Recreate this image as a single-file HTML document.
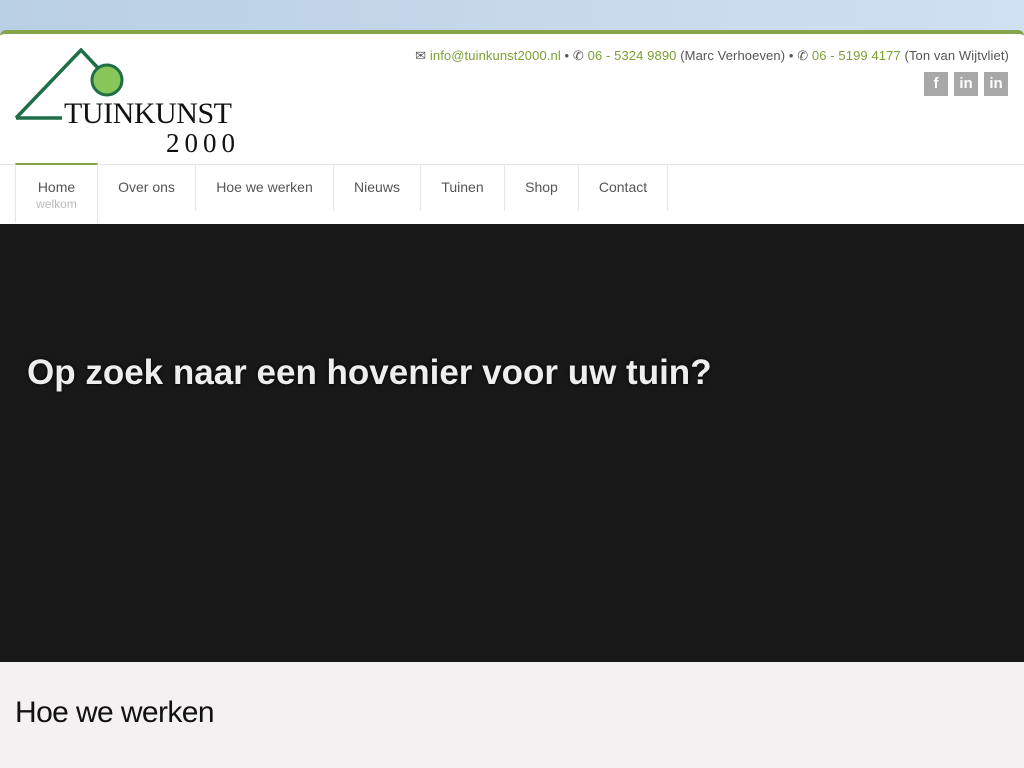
<!DOCTYPE html>
<html><head><style>
*{margin:0;padding:0;box-sizing:border-box}
body{width:1024px;height:768px;overflow:hidden;font-family:"Liberation Sans",sans-serif;background:#f3f1f2;position:relative}
.sky{position:absolute;left:0;top:0;width:1024px;height:34px;background:linear-gradient(90deg,#b9cfe4,#c6d8ea 50%,#cfe0f2)}
.hdr{position:absolute;left:0;top:30px;width:1024px;height:194px;background:#fff;border-top:4px solid #86a54a;border-radius:6px 6px 0 0}
.top{position:absolute;right:15px;top:14px;font-size:13px;color:#555;letter-spacing:0.1px}
.top a{color:#7ba033;text-decoration:none}
.soc{position:absolute;right:16px;top:38px;display:flex;gap:6px}
.soc span{width:24px;height:24px;background:#a8a8a8;color:#fff;font-weight:bold;font-size:15px;text-align:center;line-height:24px}
.nav{position:absolute;left:0;top:130px;width:1024px;height:60px;border-top:1px solid #e6e6e6}
.nav div{position:absolute;top:0;height:46px;border-right:1px solid #e6e6e6;text-align:center;font-size:14px;color:#555;padding-top:14px}
.hero{position:absolute;left:0;top:224px;width:1024px;height:438px;background:#181818}
.hero h1{position:absolute;left:27px;top:129px;color:#eee;font-size:35px;font-weight:bold;text-shadow:0 0 3px #000}
h2{position:absolute;left:15px;top:696px;font-weight:normal;font-size:30px;color:#111;letter-spacing:-0.6px}
</style></head><body>
<div class="sky"></div>
<div class="hdr">
<svg style="position:absolute;left:14px;top:14px" width="230" height="110">
<path d="M2,70 L67,2 L84,20" fill="none" stroke="#1e6e48" stroke-width="3.5"/>
<line x1="2" y1="70" x2="48" y2="70" stroke="#1e6e48" stroke-width="3.5"/>
<circle cx="93" cy="32" r="15" fill="#88c65a" stroke="#1e6e48" stroke-width="3"/>
<text x="50" y="75" font-family="Liberation Serif,serif" font-size="30" fill="#111" textLength="168">TUINKUNST</text>
<text x="152" y="104" font-family="Liberation Serif,serif" font-size="27" fill="#111" letter-spacing="5">2000</text>
</svg>
<div class="top">✉ <a>info@tuinkunst2000.nl</a> • ✆ <a>06 - 5324 9890</a> (Marc Verhoeven) • ✆ <a>06 - 5199 4177</a> (Ton van Wijtvliet)</div>
<div class="soc"><span>f</span><span>in</span><span>in</span></div>
<div class="nav">
<div style="left:15px;width:83px;border-left:1px solid #e6e6e6;border-top:2px solid #86a54a;top:-2px;height:60px">Home<br><span style="font-size:12px;color:#bbb;line-height:12px">welkom</span></div>
<div style="left:98px;width:98px">Over ons</div>
<div style="left:196px;width:138px">Hoe we werken</div>
<div style="left:334px;width:87px">Nieuws</div>
<div style="left:421px;width:84px">Tuinen</div>
<div style="left:505px;width:74px">Shop</div>
<div style="left:579px;width:89px">Contact</div>
</div>
</div>
<div class="hero"><h1>Op zoek naar een hovenier voor uw tuin?</h1></div>
<h2>Hoe we werken</h2>
</body></html>
